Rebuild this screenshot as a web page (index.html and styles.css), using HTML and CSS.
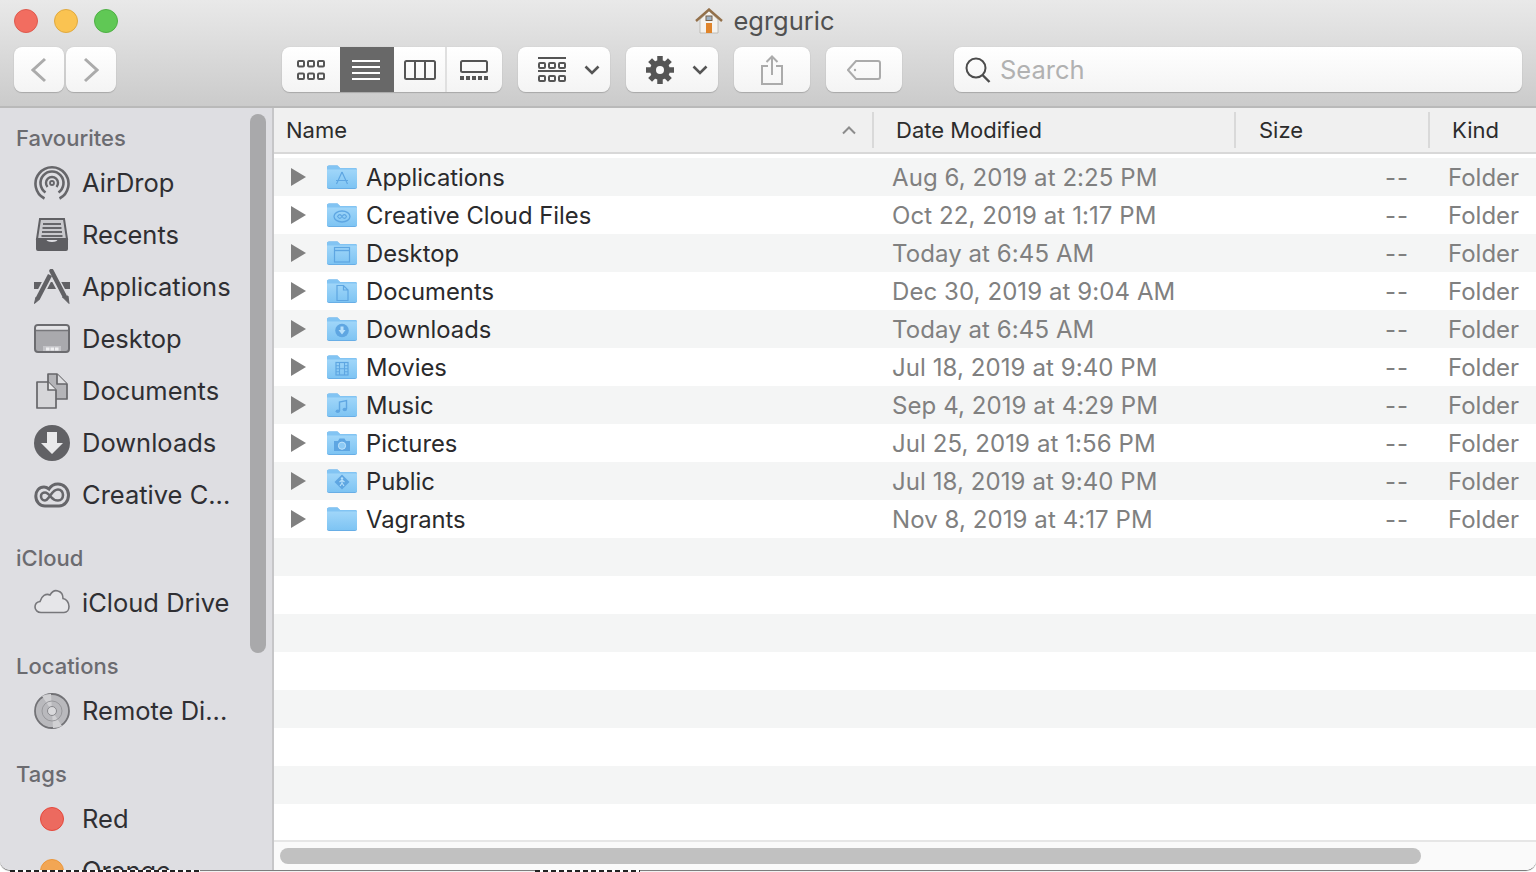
FILE: index.html
```html
<!DOCTYPE html>
<html lang="en">
<head>
    <meta charset="UTF-8">
    <title>egrguric</title>
    <link rel="stylesheet" href="styles.css">
</head>
<body>
<svg class="defs" width="0" height="0">
    <defs>
        <linearGradient id="folderBody" x1="0" y1="0" x2="0" y2="1">
            <stop offset="0" stop-color="#a0d6f9"/>
            <stop offset="1" stop-color="#7ec4f3"/>
        </linearGradient>
        <g id="folder">
            <path d="M0 2.500a2 2 0 0 1 2-2h8.500l2.500 2.500h15a2 2 0 0 1 2 2V22a2 2 0 0 1-2 2H2a2 2 0 0 1-2-2z" fill="#68aee6"/>
            <path d="M0 2.500a2 2 0 0 1 2-2h8.500l2.500 2.500h15a2 2 0 0 1 2 2v2H0z" fill="#82c4f3"/>
            <path d="M0 4.500h30V21.500a1.500 1.500 0 0 1-1.500 1.500h-27A1.500 1.500 0 0 1 0 21.500z" fill="url(#folderBody)"/>
        </g>
    </defs>
</svg>
<div class="window">
    <header class="toolbar">
        <div class="titlebar">
            <div class="lights">
                <span class="light red"></span>
                <span class="light yellow"></span>
                <span class="light green"></span>
            </div>
            <div class="title">
                <svg width="28" height="26" viewBox="0 0 28 26">
                    <path d="M5 11.500V25h18V11.500L14 3z" fill="#f4f2ee" stroke="#b5b1aa" stroke-width=".8"/>
                    <path d="M1 13L14 1.500 27 13" fill="none" stroke="#93704a" stroke-width="2.400"/>
                    <rect x="11" y="8" width="6" height="4.500" fill="#9fb2c4" stroke="#77614a"/>
                    <rect x="11" y="15" width="6" height="10" fill="#e0842a"/>
                </svg>
                <span>egrguric</span>
            </div>
            <div></div>
        </div>
        <div class="controls">
            <div class="nav">
                <button class="btn nav-btn"><svg width="16" height="26" viewBox="0 0 16 26"><path d="M14 2L2 13l12 11" class="stroke-light"/></svg></button>
                <button class="btn nav-btn"><svg width="16" height="26" viewBox="0 0 16 26"><path d="M2 2l12 11L2 24" class="stroke-light"/></svg></button>
            </div>
            <div class="btn views">
                <div class="view view-icons">
                    <svg width="28" height="20" viewBox="0 0 28 20" class="stroke-dark">
                        <rect x="1" y="1" width="6" height="5.500" rx="1"/><rect x="11" y="1" width="6" height="5.500" rx="1"/><rect x="21" y="1" width="6" height="5.500" rx="1"/>
                        <rect x="1" y="13.500" width="6" height="5.500" rx="1"/><rect x="11" y="13.500" width="6" height="5.500" rx="1"/><rect x="21" y="13.500" width="6" height="5.500" rx="1"/>
                    </svg>
                </div>
                <div class="view view-list">
                    <svg width="28" height="20" viewBox="0 0 28 20"><path d="M0 1h28M0 7h28M0 13h28M0 19h28" stroke="#fff" stroke-width="2"/></svg>
                </div>
                <div class="view view-cols">
                    <svg width="32" height="20" viewBox="0 0 32 20" class="stroke-dark"><rect x="1" y="1" width="30" height="18" rx="1.500"/><path d="M11 1v18M21 1v18"/></svg>
                </div>
                <div class="view view-gallery">
                    <svg width="28" height="20" viewBox="0 0 28 20">
                        <rect x="1" y="1" width="26" height="11" rx="1.500" class="stroke-dark"/>
                        <path d="M0 16h4v4H0zM6 16h4v4H6zM12 16h4v4h-4zM18 16h4v4h-4zM24 16h4v4h-4z" fill="#555"/>
                    </svg>
                </div>
            </div>
            <button class="btn menu-btn arrange">
                <svg width="28" height="26" viewBox="0 0 28 26" class="stroke-dark">
                    <path d="M0 1h28M0 14h28"/>
                    <rect x="1" y="6" width="6" height="5" rx="1"/><rect x="11" y="6" width="6" height="5" rx="1"/><rect x="21" y="6" width="6" height="5" rx="1"/>
                    <rect x="1" y="19" width="6" height="5" rx="1"/><rect x="11" y="19" width="6" height="5" rx="1"/><rect x="21" y="19" width="6" height="5" rx="1"/>
                </svg>
                <svg width="16" height="10" viewBox="0 0 16 10"><path d="M1.500 1.500L8 8l6.500-6.500" class="chevron"/></svg>
            </button>
            <button class="btn menu-btn gear">
                <svg width="28" height="28" viewBox="0 0 28 28">
                    <circle cx="14" cy="14" r="7" fill="none" stroke="#555" stroke-width="6"/>
                    <path d="M14 0v28M0 14h28M4.100 4.100l19.800 19.800M23.900 4.100L4.100 23.900" stroke="#555" stroke-width="5.500"/>
                    <circle cx="14" cy="14" r="4" fill="#fafafa"/>
                </svg>
                <svg width="16" height="10" viewBox="0 0 16 10"><path d="M1.500 1.500L8 8l6.500-6.500" class="chevron"/></svg>
            </button>
            <button class="btn share">
                <svg width="22" height="30" viewBox="0 0 22 30" class="stroke-light thin">
                    <path d="M7 11H1v18h20V11h-6"/>
                    <path d="M11 20V1.500M5.500 7L11 1.500 16.500 7"/>
                </svg>
            </button>
            <button class="btn tag">
                <svg width="34" height="20" viewBox="0 0 34 20" class="stroke-light thin">
                    <path d="M9 1h22a2 2 0 0 1 2 2v14a2 2 0 0 1-2 2H9l-8-9z"/>
                    <circle cx="8" cy="10" r="1.200" fill="#ababab" stroke="none"/>
                </svg>
            </button>
            <div class="btn search">
                <svg width="26" height="26" viewBox="0 0 26 26"><circle cx="11" cy="11" r="9.500" fill="none" stroke="#4c4c4c" stroke-width="2"/><path d="M17.500 18l7 7" stroke="#4c4c4c" stroke-width="2.400"/></svg>
                <span>Search</span>
            </div>
        </div>
    </header>

    <div class="main">
        <aside class="sidebar">
            <div class="sidebar-list">
                <div class="side-label first">Favourites</div>
                <div class="side-item">
                    <svg width="36" height="36" viewBox="0 0 36 36" fill="none" stroke="#66666a">
                        <path d="M10.500 33.500A16.500 16.500 0 1 1 25.500 33.500" stroke-width="2.600"/>
                        <path d="M11.500 27.500A11.500 11.500 0 1 1 24.500 27.500" stroke-width="2.600"/>
                        <path d="M13.500 22A6 6 0 1 1 22.500 22" stroke-width="2.400"/>
                        <circle cx="18" cy="18" r="2" stroke-width="1.800"/>
                    </svg>
                    <span>AirDrop</span>
                </div>
                <div class="side-item">
                    <svg width="36" height="36" viewBox="0 0 36 36">
                        <path d="M6 2h24l3 20H3z" fill="#c9c9cd" stroke="#606064" stroke-width="2"/>
                        <path d="M9 7h18M8.500 11h19M8 15h20M7.500 19h21" stroke="#66666a" stroke-width="1.800"/>
                        <path d="M2 21h9.500c1 3 3 4 6.500 4s5.500-1 6.500-4H34v11a2 2 0 0 1-2 2H4a2 2 0 0 1-2-2z" fill="#5e5e62"/>
                    </svg>
                    <span>Recents</span>
                </div>
                <div class="side-item">
                    <svg width="36" height="36" viewBox="0 0 36 36">
                        <path d="M0 13h36v7H0z" fill="#616165"/>
                        <path d="M16 6L3.500 30" stroke="#dedee2" stroke-width="8"/>
                        <path d="M17.500 3L30.500 27.500" stroke="#dedee2" stroke-width="8"/>
                        <path d="M16 6L3.500 30" stroke="#616165" stroke-width="4.500"/>
                        <path d="M1.800 28.500L0.500 34.500 5.200 30.500z" fill="#616165" stroke="#616165" stroke-linejoin="round"/>
                        <path d="M17.500 2L30.500 27" stroke="#616165" stroke-width="4.500" stroke-linecap="round"/>
                        <path d="M28.500 28L35 34.500 34 27z" fill="#616165" stroke="#616165" stroke-linejoin="round"/>
                    </svg>
                    <span>Applications</span>
                </div>
                <div class="side-item">
                    <svg width="36" height="36" viewBox="0 0 36 36">
                        <rect x="1" y="4" width="34" height="27" rx="3" fill="#a9a9ad" stroke="#6c6c70" stroke-width="2"/>
                        <rect x="2" y="5" width="32" height="5" rx="2" fill="#e4e4e7"/>
                        <path d="M2 9.500h32" stroke="#77777b" stroke-width="1.500"/>
                        <path d="M9 25h18v5H9z" fill="#c4c4c8"/>
                        <path d="M12 26.500h3.500v3H12zM16.500 26.500H20v3h-3.500zM21 26.500h3.500v3H21z" fill="#efeff1"/>
                    </svg>
                    <span>Desktop</span>
                </div>
                <div class="side-item">
                    <svg width="36" height="36" viewBox="0 0 36 36" stroke="#666669" stroke-width="1.700" stroke-linejoin="round">
                        <path d="M14 1h9l10 10v15H14z" fill="#b4b4b8"/>
                        <path d="M23 1v10h10" fill="#dedee1"/>
                        <path d="M3 9h11l8 8v18H3z" fill="#d6d6d9"/>
                        <path d="M14 9v8h8" fill="#e9e9eb"/>
                    </svg>
                    <span>Documents</span>
                </div>
                <div class="side-item">
                    <svg width="36" height="36" viewBox="0 0 36 36">
                        <circle cx="18" cy="18" r="18" fill="#616165"/>
                        <path d="M13 7h10v11h6L18 29 7 18h6z" fill="#e9e9eb"/>
                    </svg>
                    <span>Downloads</span>
                </div>
                <div class="side-item">
                    <svg width="36" height="36" viewBox="0 0 36 36" fill="none" stroke="#66666a">
                        <path d="M24 7C19 7 16.500 9.500 15 12 13.500 10.800 11.500 10 10 10 5 10 1.800 14 1.800 19 1.800 25 6 29 11 29H25C30.500 29 34.500 24 34.500 18 34.500 12 30 7 24 7Z" stroke-width="3"/>
                        <path d="M11 23.500C8.500 23.500 7 21.500 7 19 7 17 9 15.500 11 15.500 13.500 15.500 15 17.500 17 20 19 22.500 21 23.500 24 23.500 27 23.500 29 21 29 18 29 15 27 12.500 24 12.500 20 12.500 18 16 15.500 19.500 14 21.500 13 23.500 11 23.500Z" stroke-width="2.600"/>
                    </svg>
                    <span>Creative C...</span>
                </div>

                <div class="side-label">iCloud</div>
                <div class="side-item">
                    <svg width="36" height="36" viewBox="0 0 36 36">
                        <path d="M7 27.500c-3.500 0-6-2.500-6-5.500s2-5 5-5.500C7.500 11 12 8 16 10c2-3.500 5-5 8-4 3.500 1 5 4 5 7.500 3.500.5 6 4 6 8 0 3.500-2 6-5 6z" fill="#e6e6e9" stroke="#77777b" stroke-width="1.600"/>
                    </svg>
                    <span>iCloud Drive</span>
                </div>

                <div class="side-label">Locations</div>
                <div class="side-item">
                    <svg width="36" height="36" viewBox="0 0 36 36">
                        <circle cx="18" cy="18" r="17" fill="#b9b9bd" stroke="#727276" stroke-width="1.800"/>
                        <path d="M18 18L8 3a18 18 0 0 1 9-2zM18 18l10 15a18 18 0 0 1-9 2z" fill="#d0d0d3"/>
                        <circle cx="18" cy="18" r="10" fill="none" stroke="#98989c" stroke-width="1"/>
                        <circle cx="18" cy="18" r="4.500" fill="#d9d9dc" stroke="#88888c" stroke-width="1"/>
                    </svg>
                    <span>Remote Di...</span>
                </div>

                <div class="side-label">Tags</div>
                <div class="side-item">
                    <span class="tag-dot tag-red"></span>
                    <span>Red</span>
                </div>
                <div class="side-item">
                    <span class="tag-dot tag-orange"></span>
                    <span>Orange</span>
                </div>
            </div>
            <div class="side-thumb"></div>
        </aside>

        <section class="files">
            <div class="columns">
                <div class="col col-name">Name
                    <svg width="14" height="9" viewBox="0 0 14 9"><path d="M1 7.500l6-6 6 6" fill="none" stroke="#8c8c8c" stroke-width="2"/></svg>
                </div>
                <div class="col col-date">Date Modified</div>
                <div class="col col-size">Size</div>
                <div class="col col-kind">Kind</div>
            </div>
            <div class="rows">
                <div class="row">
                    <div class="cell-name">
                        <span class="arrow"></span>
                        <svg width="30" height="24" viewBox="0 0 30 24">
                            <use href="#folder"/>
                            <path d="M15 7L9.500 19M15 7l5.500 12M9 15.500h12" stroke="#5ea6e2" stroke-width="1.200" fill="none"/>
                        </svg>
                        <span>Applications</span>
                    </div>
                    <div class="cell-date">Aug 6, 2019 at 2:25 PM</div><div class="cell-size">--</div><div class="cell-kind">Folder</div>
                </div>
                <div class="row">
                    <div class="cell-name">
                        <span class="arrow"></span>
                        <svg width="30" height="24" viewBox="0 0 30 24">
                            <use href="#folder"/>
                            <ellipse cx="15" cy="13.500" rx="8" ry="5.500" stroke="#5ea6e2" stroke-width="1.300" fill="none"/>
                            <path d="M10.500 13.500c2-3 3-2 4.500 0s3 3 4.500 0c-1.500-3-3-2-4.500 0s-2.500 3-4.500 0z" stroke="#5ea6e2" stroke-width="1.100" fill="none"/>
                        </svg>
                        <span>Creative Cloud Files</span>
                    </div>
                    <div class="cell-date">Oct 22, 2019 at 1:17 PM</div><div class="cell-size">--</div><div class="cell-kind">Folder</div>
                </div>
                <div class="row">
                    <div class="cell-name">
                        <span class="arrow"></span>
                        <svg width="30" height="24" viewBox="0 0 30 24">
                            <use href="#folder"/>
                            <rect x="7.500" y="6.500" width="15" height="14.500" fill="none" stroke="#5ea6e2" stroke-width="1.200"/>
                            <path d="M7.500 9.500h15" stroke="#5ea6e2" stroke-width="1.400"/>
                        </svg>
                        <span>Desktop</span>
                    </div>
                    <div class="cell-date">Today at 6:45 AM</div><div class="cell-size">--</div><div class="cell-kind">Folder</div>
                </div>
                <div class="row">
                    <div class="cell-name">
                        <span class="arrow"></span>
                        <svg width="30" height="24" viewBox="0 0 30 24">
                            <use href="#folder"/>
                            <path d="M10 6.500h6.500L21 11v10.500H10zM16.500 6.500V11H21" fill="none" stroke="#5ea6e2" stroke-width="1.200"/>
                        </svg>
                        <span>Documents</span>
                    </div>
                    <div class="cell-date">Dec 30, 2019 at 9:04 AM</div><div class="cell-size">--</div><div class="cell-kind">Folder</div>
                </div>
                <div class="row">
                    <div class="cell-name">
                        <span class="arrow"></span>
                        <svg width="30" height="24" viewBox="0 0 30 24">
                            <use href="#folder"/>
                            <circle cx="15" cy="13.500" r="6.800" fill="#5ea6e2"/>
                            <path d="M13.500 9.500h3V13h2L15 17.500 11.500 13h2z" fill="#b7e0fb"/>
                        </svg>
                        <span>Downloads</span>
                    </div>
                    <div class="cell-date">Today at 6:45 AM</div><div class="cell-size">--</div><div class="cell-kind">Folder</div>
                </div>
                <div class="row">
                    <div class="cell-name">
                        <span class="arrow"></span>
                        <svg width="30" height="24" viewBox="0 0 30 24">
                            <use href="#folder"/>
                            <rect x="9" y="7.500" width="12" height="12.500" fill="none" stroke="#5ea6e2" stroke-width="1.200"/>
                            <path d="M12.500 7.500V20M17.500 7.500V20M12.500 13.700h5M9 10.700h3.500M9 13.700h3.500M9 16.700h3.500M17.500 10.700H21M17.500 13.700H21M17.500 16.700H21" stroke="#5ea6e2" stroke-width="1.100"/>
                        </svg>
                        <span>Movies</span>
                    </div>
                    <div class="cell-date">Jul 18, 2019 at 9:40 PM</div><div class="cell-size">--</div><div class="cell-kind">Folder</div>
                </div>
                <div class="row">
                    <div class="cell-name">
                        <span class="arrow"></span>
                        <svg width="30" height="24" viewBox="0 0 30 24">
                            <use href="#folder"/>
                            <path d="M12.500 18V9l7-1.500v8.500" fill="none" stroke="#5ea6e2" stroke-width="1.400"/>
                            <ellipse cx="10.800" cy="18.300" rx="2.200" ry="1.700" fill="#5ea6e2"/>
                            <ellipse cx="17.800" cy="16.500" rx="2.200" ry="1.700" fill="#5ea6e2"/>
                        </svg>
                        <span>Music</span>
                    </div>
                    <div class="cell-date">Sep 4, 2019 at 4:29 PM</div><div class="cell-size">--</div><div class="cell-kind">Folder</div>
                </div>
                <div class="row">
                    <div class="cell-name">
                        <span class="arrow"></span>
                        <svg width="30" height="24" viewBox="0 0 30 24">
                            <use href="#folder"/>
                            <path d="M7 10h4l1.500-2.500h5L19 10h4v10H7z" fill="#5ea6e2"/>
                            <circle cx="15" cy="14.700" r="3.600" fill="#8ccaf5" stroke="#bfe3fb" stroke-width="1"/>
                        </svg>
                        <span>Pictures</span>
                    </div>
                    <div class="cell-date">Jul 25, 2019 at 1:56 PM</div><div class="cell-size">--</div><div class="cell-kind">Folder</div>
                </div>
                <div class="row">
                    <div class="cell-name">
                        <span class="arrow"></span>
                        <svg width="30" height="24" viewBox="0 0 30 24">
                            <use href="#folder"/>
                            <path d="M15 5.500L22.500 13 15 20.500 7.500 13z" fill="#5ea6e2"/>
                            <circle cx="15" cy="9.500" r="1.200" fill="#b7e0fb"/>
                            <path d="M15 11l-2.500 2M15 11l2.500 2M15 11v3l-2 3M15 14l2 3" stroke="#b7e0fb" stroke-width="1.100" fill="none"/>
                        </svg>
                        <span>Public</span>
                    </div>
                    <div class="cell-date">Jul 18, 2019 at 9:40 PM</div><div class="cell-size">--</div><div class="cell-kind">Folder</div>
                </div>
                <div class="row">
                    <div class="cell-name">
                        <span class="arrow"></span>
                        <svg width="30" height="24" viewBox="0 0 30 24"><use href="#folder"/></svg>
                        <span>Vagrants</span>
                    </div>
                    <div class="cell-date">Nov 8, 2019 at 4:17 PM</div><div class="cell-size">--</div><div class="cell-kind">Folder</div>
                </div>
                <div class="row"></div><div class="row"></div><div class="row"></div><div class="row"></div>
                <div class="row"></div><div class="row"></div><div class="row"></div><div class="row"></div>
            </div>
            <div class="hscroll"><div class="hthumb"></div></div>
        </section>
    </div>
</div>
<div class="behind">
    <span class="peek peek-a"></span>
    <span class="peek peek-b"></span>
</div>
</body>
</html>
```

FILE: styles.css
```css
*{
    margin: 0;
    padding: 0;
    box-sizing: border-box;
}
html,body{
    height: 100%;
    overflow: hidden;
}
body{
    background: #fff;
    font-family: Inter, "Liberation Sans", sans-serif;
    color: #2a2a2c;
}
.defs{
    display: block;
    height: 0;
}
.window{
    height: 870px;
    display: flex;
    flex-direction: column;
    overflow: hidden;
    border-radius: 0 0 10px 10px;
    box-shadow: 0 1px 1px #6f6f6f;
}
.behind{
    display: flex;
    height: 2px;
    padding-left: 10px;
}
.peek{
    height: 2px;
    background: repeating-linear-gradient(90deg, #222 0 5px, #fff 5px 8px);
}
.peek-a{
    width: 190px;
    margin-right: 335px;
}
.peek-b{
    width: 105px;
}
.toolbar{
    height: 108px;
    flex: none;
    padding: 0 14px 0;
    background: linear-gradient(#e9e9e9, #cbcbcb);
    border-bottom: 2px solid #b9b9b9;
}
.titlebar{
    height: 47px;
    display: grid;
    grid-template-columns: 1fr auto 1fr;
    align-items: center;
    padding-bottom: 6px;
}
.lights{
    display: flex;
    gap: 16px;
}
.light{
    width: 24px;
    height: 24px;
    border-radius: 50%;
}
.red{
    background: #f26d60;
    border: 1px solid #de5a4e;
}
.yellow{
    background: #fac351;
    border: 1px solid #e0a93f;
}
.green{
    background: #60c855;
    border: 1px solid #4eb044;
}
.title{
    display: flex;
    align-items: center;
    gap: 10px;
    font-size: 25.5px;
    color: #505050;
    margin-left: -6px;
}
.controls{
    display: flex;
    height: 46px;
}
.btn{
    height: 45px;
    display: flex;
    align-items: center;
    justify-content: center;
    border: 0;
    border-radius: 8px;
    background: linear-gradient(#ffffff, #f4f4f4);
    box-shadow: 0 1px 1px #a8a8a8, 0 0 1px #b5b5b5;
    font-family: inherit;
}
.nav{
    display: flex;
    gap: 2px;
    margin-right: 166px;
}
.nav-btn{
    width: 50px;
}
.views{
    width: 220px;
    overflow: hidden;
    margin-right: 16px;
}
.view{
    height: 100%;
    display: flex;
    align-items: center;
    justify-content: center;
}
.view-icons{
    width: 58px;
}
.view-list{
    width: 54px;
    height: 47px;
    padding-right: 2px;
    background: #686868;
}
.view-cols{
    width: 53px;
    border-right: 2px solid #e0e0e0;
}
.view-gallery{
    width: 55px;
    padding-right: 2px;
}
.menu-btn{
    width: 92px;
    margin-right: 16px;
    gap: 18px;
    padding-left: 20px;
    justify-content: flex-start;
}
.share,.tag{
    width: 76px;
    margin-right: 16px;
}
.tag{
    margin-right: 52px;
}
.search{
    width: 568px;
    justify-content: flex-start;
    padding-left: 11px;
    gap: 9px;
    font-size: 25.5px;
    color: #b1b1b1;
}
.stroke-light{
    fill: none;
    stroke: #ababab;
    stroke-width: 3;
}
.stroke-light.thin{
    stroke-width: 2;
}
.stroke-dark{
    fill: none;
    stroke: #555;
    stroke-width: 2;
}
.chevron{
    fill: none;
    stroke: #555;
    stroke-width: 2.6;
}

.main{
    flex: 1;
    display: flex;
    min-height: 0;
}
.sidebar{
    width: 274px;
    flex: none;
    position: relative;
    overflow: hidden;
    background: #dedee2;
    border-right: 2px solid #c6c6c8;
}
.sidebar-list{
    padding-top: 15px;
}
.side-label{
    height: 30px;
    margin: 22px 0 4px 16px;
    line-height: 30px;
    font-size: 22px;
    font-weight: 500;
    color: #6b6b70;
}
.side-label.first{
    margin-top: 0;
}
.side-item{
    height: 52px;
    display: flex;
    align-items: center;
    padding-left: 34px;
    gap: 12px;
    font-size: 25.5px;
    color: #2f2f33;
    white-space: nowrap;
}
.side-item svg{
    flex: none;
}
.side-item span:last-child{
    margin-top: -2px;
}
.tag-dot{
    width: 24px;
    height: 24px;
    margin: 0 6px;
    border-radius: 50%;
    flex: none;
}
.tag-red{
    background: #ec6a5f;
    border: 1px solid #e5483c;
}
.tag-orange{
    background: #f2a654;
    border: 1px solid #eb963a;
}
.side-thumb{
    position: absolute;
    left: 250px;
    top: 6px;
    width: 16px;
    height: 539px;
    border-radius: 8px;
    background: #a9a9ab;
}

.files{
    flex: 1;
    min-width: 0;
    display: flex;
    flex-direction: column;
    background: #fff;
}
.columns{
    height: 46px;
    flex: none;
    display: grid;
    grid-template-columns: 600px 362px 194px 1fr;
    align-items: center;
    background: #f0f0f0;
    border-bottom: 2px solid #d8d8d8;
    font-size: 22px;
    color: #2c2c2c;
}
.col{
    height: 36px;
    display: flex;
    align-items: center;
    border-right: 2px solid #d9d9d9;
}
.col-name{
    justify-content: space-between;
    padding: 0 16px 0 12px;
}
.col-date{
    padding-left: 22px;
}
.col-size{
    padding-left: 23px;
}
.col-kind{
    padding-left: 22px;
    border-right: 0;
}
.rows{
    flex: 1;
    min-height: 0;
    overflow: hidden;
    padding-top: 4px;
    border-bottom: 2px solid #e6e6e6;
}
.row{
    height: 38px;
    display: grid;
    grid-template-columns: 618px 340px 177px 1fr;
    align-items: center;
    font-size: 24px;
    color: #808080;
    white-space: nowrap;
}
.row:nth-child(odd){
    background: #f4f5f5;
}
.cell-name{
    display: flex;
    align-items: center;
    padding-left: 17px;
    font-size: 23.8px;
    color: #2a2a2c;
}
.cell-name svg{
    margin: 0 9px 0 21px;
}
.cell-date{
    letter-spacing: .08px;
}
.arrow{
    width: 0;
    height: 0;
    border-style: solid;
    border-width: 9px 0 9px 15px;
    border-color: transparent transparent transparent #808080;
}
.cell-size{
    text-align: right;
    letter-spacing: 1px;
}
.cell-kind{
    padding-left: 39px;
}
.hscroll{
    height: 28px;
    flex: none;
    padding: 6px 0 0 6px;
    background: #fafafa;
}
.hthumb{
    width: 1141px;
    height: 16px;
    border-radius: 8px;
    background: #c1c1c1;
}
```
